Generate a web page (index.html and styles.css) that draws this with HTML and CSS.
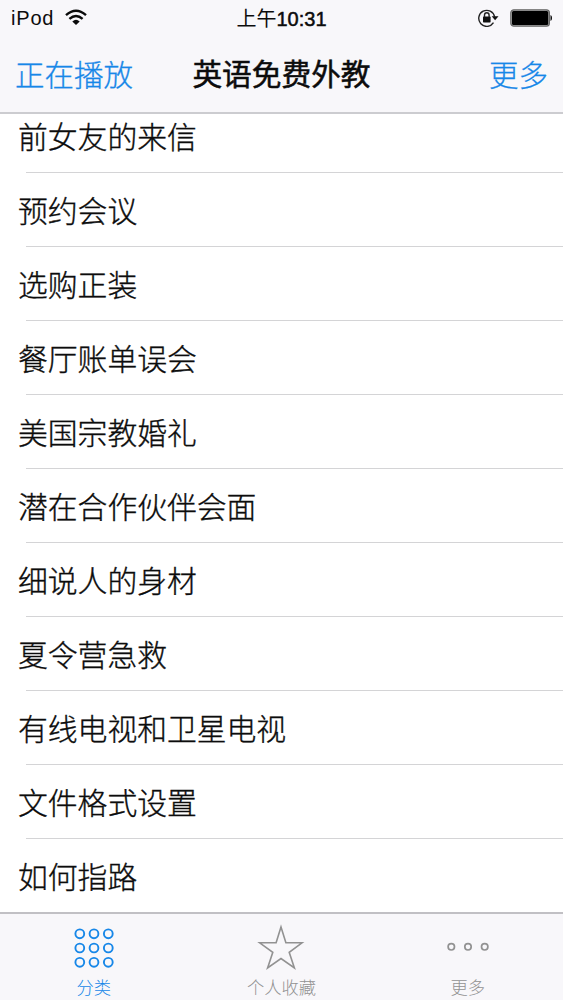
FILE: index.html
```html
<!DOCTYPE html>
<html lang="zh-CN">
<head>
<meta charset="utf-8">
<title>英语免费外教</title>
<link rel="stylesheet" href="styles.css">
</head>
<body>
<div class="screen">
  <header class="top">
    <div class="status">
      <div class="carrier">
        <span>iPod</span>
        <svg class="wifi" width="22" height="17" viewBox="0 0 22 17" fill="none" stroke="#0a0a0a" stroke-width="2.4">
          <path d="M1 6.1Q11-2.700 21 6.100M4.400 9.900Q11 4 17.600 9.900"/>
          <path d="M7.300 12.400Q11 9 14.700 12.400L11 16Z" fill="#0a0a0a" stroke="none"/>
        </svg>
      </div>
      <div class="clock">上午<span class="digits">10:31</span></div>
      <div class="indicators">
        <svg width="21" height="18" viewBox="0 0 21 18" fill="none" stroke="#222" stroke-width="1.400">
          <path d="M15.500 13.700A8 8 0 1 1 16.600 7.800"/>
          <path d="M13.700 7.300H20.500L17.100 11.300Z" fill="#111" stroke="none"/>
          <rect x="5" y="7.600" width="7.600" height="5.800" rx=".6" fill="#111" stroke="none"/>
          <path d="M6.500 8V6a2.300 2.300 0 0 1 4.600 0V8"/>
        </svg>
        <svg width="42" height="18" viewBox="0 0 42 18">
          <rect x=".8" y=".8" width="38.600" height="16.400" rx="3" fill="#aaa" stroke="#666" stroke-width="1.200"/>
          <rect x="2" y="2" width="36.200" height="14" rx="1.500"/>
          <path d="M40.500 6q1.500.4 1.500 3t-1.500 3Z"/>
        </svg>
      </div>
    </div>
    <nav class="nav">
      <a class="action">正在播放</a>
      <h1 class="title">英语免费外教</h1>
      <a class="action right">更多</a>
    </nav>
  </header>
  <main class="viewport">
    <ul class="list">
      <li>前女友的来信</li>
      <li>预约会议</li>
      <li>选购正装</li>
      <li>餐厅账单误会</li>
      <li>美国宗教婚礼</li>
      <li>潜在合作伙伴会面</li>
      <li>细说人的身材</li>
      <li>夏令营急救</li>
      <li>有线电视和卫星电视</li>
      <li>文件格式设置</li>
      <li>如何指路</li>
    </ul>
  </main>
  <footer class="tabs">
    <div class="tab active">
      <svg width="48" height="48" viewBox="0 0 48 48" fill="none" stroke="currentColor" stroke-width="1.900">
        <circle cx="9.800" cy="9.800" r="4.400"/><circle cx="24" cy="9.800" r="4.400"/><circle cx="38.300" cy="9.800" r="4.400"/>
        <circle cx="9.800" cy="24" r="4.400"/><circle cx="24" cy="24" r="4.400"/><circle cx="38.300" cy="24" r="4.400"/>
        <circle cx="9.800" cy="38.300" r="4.400"/><circle cx="24" cy="38.300" r="4.400"/><circle cx="38.300" cy="38.300" r="4.400"/>
      </svg>
      <span>分类</span>
    </div>
    <div class="tab">
      <svg width="48" height="48" viewBox="0 0 48 48" fill="none" stroke="currentColor" stroke-width="1.600">
        <path d="M24 3L28.900 18.800H45L32.200 28.300L37.400 44L24 34.600L10.600 44L15.800 28.300L2.700 18.800H19.100Z"/>
      </svg>
      <span>个人收藏</span>
    </div>
    <div class="tab more">
      <svg width="48" height="48" viewBox="0 0 48 48" fill="none" stroke="currentColor" stroke-width="1.700">
        <circle cx="7.300" cy="22.800" r="3.200"/><circle cx="24" cy="22.800" r="3.200"/><circle cx="40.700" cy="22.800" r="3.200"/>
      </svg>
      <span>更多</span>
    </div>
  </footer>
</div>
</body>
</html>
```
FILE: styles.css
```css
* { box-sizing: border-box; }

body {
  margin: 0;
  background: #fff;
  color: #0c0c0c;
  font-family: "Noto Sans CJK SC", sans-serif;
  font-weight: 300;
}

.screen {
  display: flex;
  flex-direction: column;
  width: 563px;
  height: 1000px;
  overflow: hidden;
}

.top {
  flex: none;
  height: 114px;
  background: #f8f7fa;
  border-bottom: 2px solid #ccccd0;
}

.status {
  display: grid;
  grid-template-columns: 1fr auto 1fr;
  align-items: center;
  height: 36px;
  padding: 0 11px 0 11px;
}

.carrier {
  display: flex;
  align-items: center;
  gap: 11px;
  font: 20px/36px "Liberation Sans", Arial, sans-serif;
  letter-spacing: 0.8px;
}

.wifi { margin-top: -2px; }

.clock {
  font-size: 20px;
  font-weight: 400;
  line-height: 34px;
}

.digits {
  font-family: "Liberation Sans", Arial, sans-serif;
  -webkit-text-stroke: 0.5px;
}

.indicators {
  display: flex;
  justify-content: flex-end;
  gap: 11px;
}

.nav {
  display: grid;
  grid-template-columns: 1fr auto 1fr;
  align-items: center;
  height: 74px;
  padding: 0 15px;
}

.action {
  color: #1787e8;
  font-size: 29.5px;
  line-height: 74px;
  -webkit-text-stroke: 0.3px;
}

.right { text-align: right; }

.title {
  margin: 0;
  font-size: 29.7px;
  font-weight: 400;
  line-height: 74px;
  -webkit-text-stroke: 0.5px;
}

.viewport {
  flex: 1;
  min-height: 0;
  overflow: hidden;
}

.list {
  margin: -15px 0 0;
  padding: 0;
  list-style: none;
}

.list li {
  height: 74px;
  padding-left: 18px;
  font-size: 29.8px;
  line-height: 72px;
  -webkit-text-stroke: 0.35px;
  background: linear-gradient(#d4d4d6, #d4d4d6) 26px 100% / 100% 1px no-repeat;
}

.tabs {
  flex: none;
  display: grid;
  grid-template-columns: repeat(3, 1fr);
  height: 88px;
  background: #f8f7fa;
  border-top: 2px solid #c1c0c4;
}

.tab {
  display: flex;
  flex-direction: column;
  align-items: center;
  padding-top: 10px;
  color: #929292;
  font-size: 17.3px;
  line-height: 30px;
}

.active { color: #1787e8; }

.more { padding-right: 3px; }
```
